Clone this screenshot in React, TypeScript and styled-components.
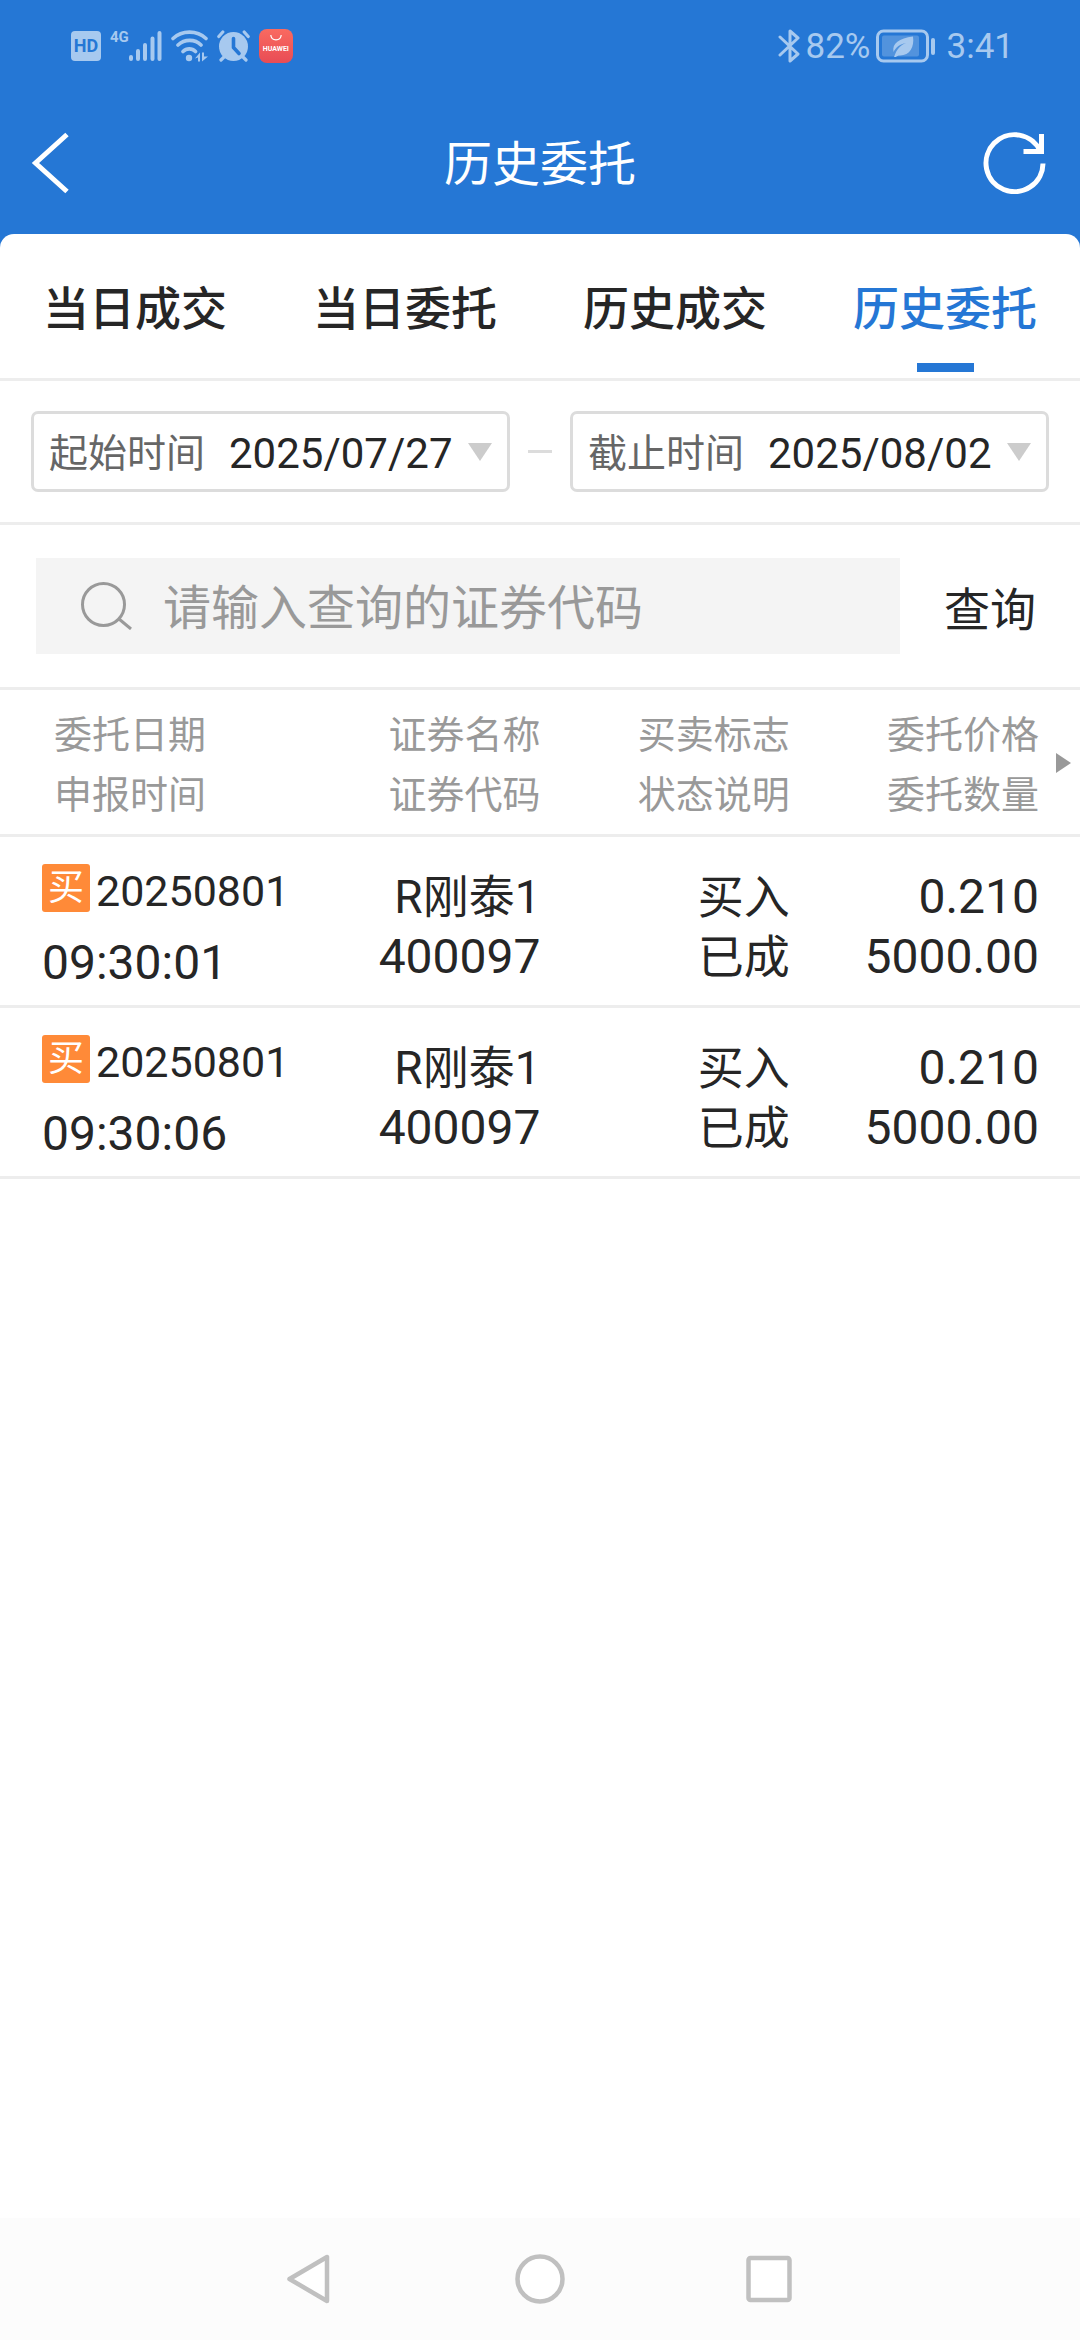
import React, { useState } from 'react';
import styled, { createGlobalStyle } from 'styled-components';

const color = {
  brand: '#2577d5',
  status: '#a7c9ef',
  text: '#262626',
  label: '#666666',
  muted: '#999999',
  line: '#ededed',
  border: '#dcdcdc',
  caret: '#cccccc',
  buy: '#ff8a38',
};

const GlobalStyle = createGlobalStyle`
  * { box-sizing: border-box; }
  body {
    margin: 0;
    font-family: Roboto, 'Noto Sans CJK SC', sans-serif;
    color: ${color.text};
  }
  button, input {
    margin: 0;
    padding: 0;
    border: 0;
    background: none;
    font: inherit;
    color: inherit;
  }
  button { cursor: pointer; }
  svg { display: block; flex: none; }
`;

const Screen = styled.div`
  display: flex;
  flex-direction: column;
  min-height: 100vh;
  background: ${color.brand};
`;

const StatusBar = styled.div`
  display: flex;
  align-items: center;
  justify-content: space-between;
  height: 92px;
  padding: 0 66px 0 71px;
  color: ${color.status};
`;

const StatusGroup = styled.div<{ $gap: number }>`
  display: flex;
  align-items: center;
  gap: ${(p) => p.$gap}px;
`;

const StatusText = styled.span`
  padding-top: 2px;
  font-size: 35px;
  line-height: 44px;
`;

const Clock = styled(StatusText)`
  margin-left: 4px;
`;

const HdBadge = styled.span`
  width: 30px;
  height: 30px;
  border-radius: 4px;
  background: ${color.status};
  color: ${color.brand};
  font-size: 18px;
  font-weight: 700;
  line-height: 30px;
  text-align: center;
`;

const Signal = styled.span`
  display: flex;
  align-items: flex-start;
  height: 32px;
`;

const Network = styled.span`
  font-size: 15px;
  font-weight: 700;
  line-height: 15px;
`;

const StoreBadge = styled.span`
  display: flex;
  flex-direction: column;
  align-items: center;
  width: 34px;
  height: 34px;
  padding-top: 6px;
  border-radius: 8px;
  background: linear-gradient(#f96a60, #e84c55);
  color: #ffffff;
  font-size: 7px;
  font-weight: 700;
  line-height: 16px;
`;

const TitleBar = styled.header`
  display: grid;
  grid-template-columns: 1fr auto 1fr;
  align-items: center;
  height: 142px;
  padding: 0 31px;
  color: #ffffff;
`;

const Title = styled.h1`
  margin: 0;
  padding-top: 4px;
  font-size: 48px;
  font-weight: 400;
  line-height: 60px;
`;

const IconButton = styled.button<{ $end?: boolean }>`
  justify-self: ${(p) => (p.$end ? 'end' : 'start')};
`;

const Sheet = styled.main`
  flex: 1;
  border-radius: 14px 14px 0 0;
  background: #ffffff;
`;

const Tabs = styled.nav`
  display: grid;
  grid-template-columns: repeat(4, 1fr);
  border-bottom: 3px solid ${color.line};
`;

const Tab = styled.button<{ $active: boolean }>`
  position: relative;
  height: 144px;
  padding-top: 6px;
  font-size: 46px;
  font-weight: 500;
  line-height: 60px;
  color: ${(p) => (p.$active ? color.brand : color.text)};

  &::after {
    content: '';
    position: absolute;
    bottom: 6px;
    left: calc(50% - 28px);
    width: 57px;
    height: 9px;
    background: ${(p) => (p.$active ? color.brand : 'transparent')};
  }
`;

const DateRow = styled.section`
  display: flex;
  align-items: center;
  gap: 18px;
  padding: 30px 31px;
  border-bottom: 3px solid ${color.line};
`;

const Dash = styled.span`
  width: 24px;
  height: 3px;
  background: ${color.border};
`;

const DateButton = styled.button`
  display: flex;
  flex: 1;
  align-items: center;
  height: 81px;
  padding: 0 15px;
  border: 3px solid ${color.border};
  border-radius: 7px;
  line-height: 60px;
`;

const DateLabel = styled.span`
  padding-top: 4px;
  font-size: 39px;
  color: ${color.label};
`;

const DateValue = styled.span`
  flex: 1;
  padding: 4px 0 0 24px;
  font-size: 42px;
  text-align: left;
`;

const SearchRow = styled.form`
  display: flex;
  padding: 33px 0 33px 36px;
  border-bottom: 3px solid ${color.line};
`;

const SearchBox = styled.label`
  display: flex;
  flex: 1;
  align-items: center;
  gap: 30px;
  height: 96px;
  padding: 0 45px;
  background: #f4f4f4;
  color: ${color.muted};
`;

const SearchInput = styled.input`
  flex: 1;
  min-width: 0;
  height: 76px;
  padding-top: 4px;
  font-size: 48px;
  outline: none;
  color: ${color.text};

  &::placeholder {
    color: ${color.muted};
    opacity: 1;
  }
`;

const SearchButton = styled.button`
  width: 180px;
  font-size: 46px;
`;

const TableWrap = styled.div`
  position: relative;
`;

const Orders = styled.table`
  display: block;
`;

const HeadGroup = styled.thead`
  display: block;
`;

const BodyGroup = styled.tbody`
  display: block;
`;

const Row = styled.tr<{ $head?: boolean }>`
  display: grid;
  grid-template-columns: repeat(4, 1fr);
  padding: ${(p) => (p.$head ? '15px 41px 9px 42px' : '24px 41px 12px 42px')};
  border-bottom: 3px solid ${color.line};
`;

const HeadCell = styled.th<{ $first: boolean }>`
  display: flex;
  flex-direction: column;
  padding: ${(p) => (p.$first ? '0 0 0 12px' : '0')};
  font-size: 38px;
  font-weight: 400;
  line-height: 60px;
  text-align: ${(p) => (p.$first ? 'left' : 'right')};
  color: ${color.muted};
`;

const Cell = styled.td`
  display: flex;
  flex-direction: column;
  padding: 6px 0 0;
  text-align: right;
  line-height: 60px;
`;

const DateCell = styled.td`
  display: flex;
  flex-direction: column;
  gap: 12px;
  padding: 0;
  line-height: 60px;
`;

const Words = styled.span`
  font-size: 46px;
`;

const Digits = styled.span`
  font-size: 48px;
`;

const OrderDate = styled.span`
  display: flex;
  align-items: center;
  gap: 6px;
  height: 60px;
  font-size: 43px;
`;

const BuyBadge = styled.span`
  width: 48px;
  height: 48px;
  margin-bottom: 6px;
  border-radius: 3px;
  background: ${color.buy};
  color: #ffffff;
  font-size: 36px;
  line-height: 48px;
  text-align: center;
`;

const MoreColumns = styled.svg`
  position: absolute;
  top: 63px;
  right: 9px;
`;

const SystemNav = styled.footer`
  display: flex;
  align-items: center;
  justify-content: center;
  gap: 180px;
  height: 122px;
  background: #fcfcfc;
`;

const tabs = ['当日成交', '当日委托', '历史成交', '历史委托'];

const columns = [
  ['委托日期', '申报时间'],
  ['证券名称', '证券代码'],
  ['买卖标志', '状态说明'],
  ['委托价格', '委托数量'],
];

const orders = [
  { date: '20250801', time: '09:30:01', name: 'R刚泰1', code: '400097', side: '买入', state: '已成', price: '0.210', amount: '5000.00' },
  { date: '20250801', time: '09:30:06', name: 'R刚泰1', code: '400097', side: '买入', state: '已成', price: '0.210', amount: '5000.00' },
];

const SignalBars = () => (
  <svg width="33" height="32" viewBox="0 0 33 32" stroke="currentColor" strokeWidth="4" strokeLinecap="round">
    <path d="M2 27v2M9 21v8M16 15v14M23.500 8.500v20.500M30.500 3v26" />
  </svg>
);

const Wifi = () => (
  <svg width="37" height="32" viewBox="0 0 37 32" fill="none" stroke="currentColor" strokeWidth="3.600" strokeLinecap="round">
    <path d="M2 8.500c9-8.500 24-8.500 33 0M7 15c6.500-6.200 17-6.200 23 0M12 21.500c3.500-3.500 9-3.500 12.500 0" />
    <circle cx="18" cy="28" r="3.200" fill="currentColor" stroke="none" />
    <path d="M24 28.500l5-6v9h-2v-4zM31 31.500v-9h2v4h4z" fill="currentColor" stroke="none" />
  </svg>
);

const Alarm = () => (
  <svg width="33" height="32" viewBox="0 0 33 32" fill="none">
    <circle cx="16.500" cy="16.500" r="14.500" fill="currentColor" />
    <path d="M1.800 6.500l4-4.500M31.200 6.500l-4-4.500M4 30l4-4M29 30l-4-4" stroke="currentColor" strokeWidth="3.200" strokeLinecap="round" />
    <path d="M16.500 8.500v9l5.500 6" stroke={color.brand} strokeWidth="3.600" strokeLinecap="round" strokeLinejoin="round" />
  </svg>
);

const Bluetooth = () => (
  <svg width="23" height="34" viewBox="0 0 23 34" fill="none" stroke="currentColor" strokeWidth="3" strokeLinecap="round" strokeLinejoin="round">
    <path d="M2 8l18 17-8 7V2l8 7L2 26" />
  </svg>
);

const Battery = () => (
  <svg width="62" height="34" viewBox="0 0 62 34" fill="none">
    <rect x="1.500" y="2" width="50" height="30" rx="6" stroke="currentColor" strokeWidth="3" />
    <rect x="6" y="6.500" width="37" height="21" rx="2" fill="currentColor" opacity="0.35" />
    <path d="M37 7.500c1.500 10-3 19-13 19-2 0-3 .5-4 1.500h-2c3-9 7-12 12-14-6 1-10 4-12.500 9C16 14 23 9.500 37 7.500z" fill="currentColor" />
    <rect x="55" y="9" width="4" height="17" rx="2" fill="currentColor" />
  </svg>
);

const Caret = () => (
  <svg width="24" height="18" viewBox="0 0 24 18" fill={color.caret}>
    <path d="M0 0h24L12 18z" />
  </svg>
);

export default function App() {
  const [active, setActive] = useState(3);
  const [code, setCode] = useState('');

  return (
    <Screen>
      <GlobalStyle />
      <StatusBar>
        <StatusGroup $gap={9}>
          <HdBadge>HD</HdBadge>
          <Signal>
            <Network>4G</Network>
            <SignalBars />
          </Signal>
          <Wifi />
          <Alarm />
          <StoreBadge>
            <svg width="12" height="6" viewBox="0 0 12 6" fill="none" stroke="currentColor" strokeWidth="1.200">
              <path d="M.8 0c.4 6.500 10 6.500 10.400 0" />
            </svg>
            HUAWEI
          </StoreBadge>
        </StatusGroup>
        <StatusGroup $gap={5}>
          <Bluetooth />
          <StatusText>82%</StatusText>
          <Battery />
          <Clock>3:41</Clock>
        </StatusGroup>
      </StatusBar>

      <TitleBar>
        <IconButton type="button" aria-label="返回">
          <svg width="38" height="62" viewBox="0 0 38 62" fill="none" stroke="currentColor" strokeWidth="5">
            <path d="M36 2.500L4.500 31 36 59.500" />
          </svg>
        </IconButton>
        <Title>历史委托</Title>
        <IconButton type="button" $end aria-label="刷新">
          <svg width="66" height="62" viewBox="0 0 66 62" fill="none" stroke="currentColor" strokeWidth="5">
            <path d="M60 31.500A28.500 28.500 0 1 1 57.500 19.500" />
            <path d="M58.500 2v17.500H40.500" />
          </svg>
        </IconButton>
      </TitleBar>

      <Sheet>
        <Tabs>
          {tabs.map((name, i) => (
            <Tab key={name} type="button" $active={i === active} onClick={() => setActive(i)}>
              {name}
            </Tab>
          ))}
        </Tabs>

        <DateRow>
          <DateButton type="button" aria-haspopup="dialog">
            <DateLabel>起始时间</DateLabel>
            <DateValue>2025/07/27</DateValue>
            <Caret />
          </DateButton>
          <Dash />
          <DateButton type="button" aria-haspopup="dialog">
            <DateLabel>截止时间</DateLabel>
            <DateValue>2025/08/02</DateValue>
            <Caret />
          </DateButton>
        </DateRow>

        <SearchRow onSubmit={(e) => e.preventDefault()}>
          <SearchBox>
            <svg width="52" height="48" viewBox="0 0 52 48" fill="none" stroke="currentColor" strokeWidth="3">
              <circle cx="22.500" cy="22.500" r="21" />
              <path d="M38 37l12 10" />
            </svg>
            <SearchInput
              type="text"
              aria-label="证券代码"
              placeholder="请输入查询的证券代码"
              value={code}
              onChange={(e) => setCode(e.target.value)}
            />
          </SearchBox>
          <SearchButton type="submit">查询</SearchButton>
        </SearchRow>

        <TableWrap>
          <Orders>
            <HeadGroup>
              <Row $head>
                {columns.map(([upper, lower], i) => (
                  <HeadCell key={upper} scope="col" $first={i === 0}>
                    <span>{upper}</span>
                    <span>{lower}</span>
                  </HeadCell>
                ))}
              </Row>
            </HeadGroup>
            <BodyGroup>
              {orders.map((o) => (
                <Row key={o.time}>
                  <DateCell>
                    <OrderDate>
                      <BuyBadge>买</BuyBadge>
                      {o.date}
                    </OrderDate>
                    <Digits>{o.time}</Digits>
                  </DateCell>
                  <Cell>
                    <Words>{o.name}</Words>
                    <Digits>{o.code}</Digits>
                  </Cell>
                  <Cell>
                    <Words>{o.side}</Words>
                    <Words>{o.state}</Words>
                  </Cell>
                  <Cell>
                    <Digits>{o.price}</Digits>
                    <Digits>{o.amount}</Digits>
                  </Cell>
                </Row>
              ))}
            </BodyGroup>
          </Orders>
          <MoreColumns width="15" height="20" viewBox="0 0 15 20" fill={color.muted}>
            <path d="M0 0l15 10L0 20z" />
          </MoreColumns>
        </TableWrap>
      </Sheet>

      <SystemNav>
        <button type="button" aria-label="系统返回">
          <svg width="50" height="50" viewBox="0 0 50 50" fill="#fff" stroke="#c0c0c0" strokeWidth="4.500" strokeLinejoin="round">
            <path d="M42 3v44L4.500 25z" />
          </svg>
        </button>
        <button type="button" aria-label="主屏幕">
          <svg width="50" height="50" viewBox="0 0 50 50" fill="#fff" stroke="#c0c0c0" strokeWidth="4.500">
            <circle cx="25" cy="25" r="22.500" />
          </svg>
        </button>
        <button type="button" aria-label="最近任务">
          <svg width="50" height="50" viewBox="0 0 50 50" fill="#fff" stroke="#c0c0c0" strokeWidth="4.500">
            <rect x="3.500" y="4" width="41" height="42" rx="2" />
          </svg>
        </button>
      </SystemNav>
    </Screen>
  );
}
